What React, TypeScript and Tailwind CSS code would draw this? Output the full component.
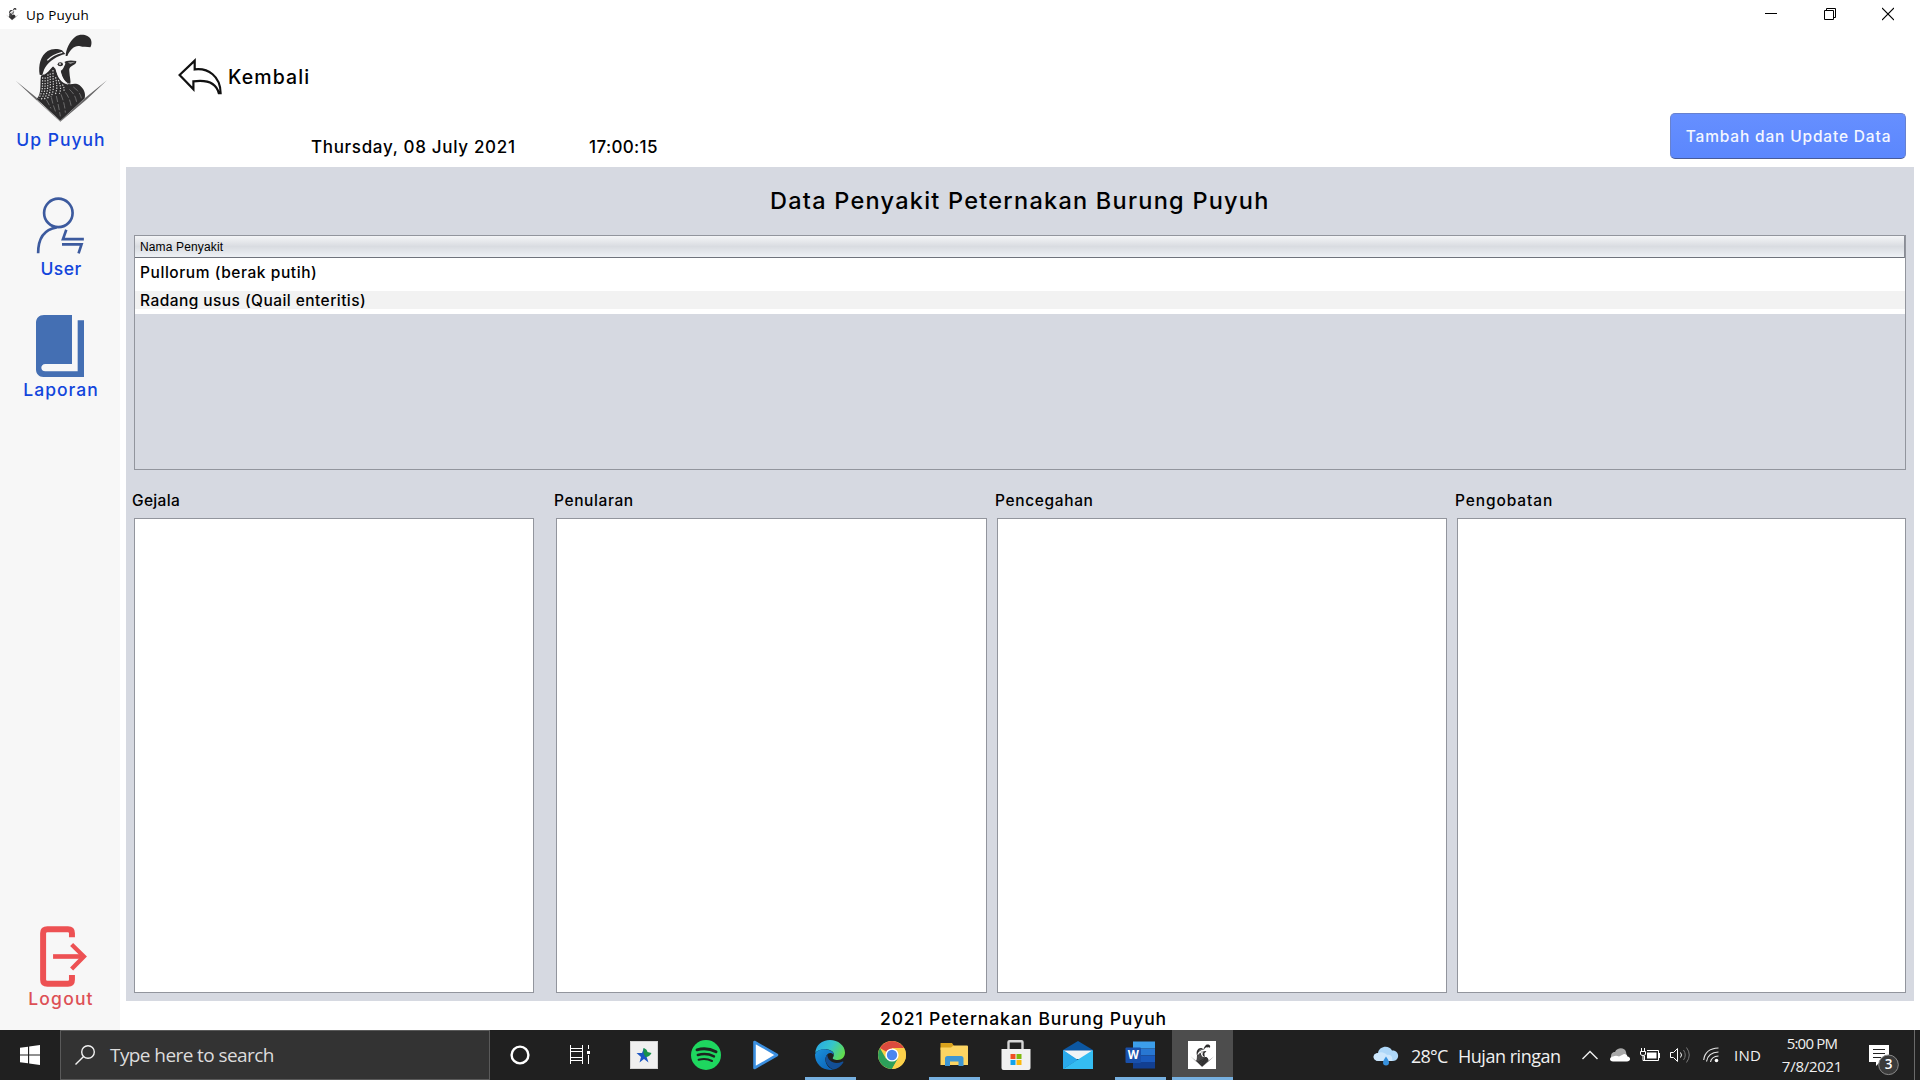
import React from 'react';

type IconProps = { className?: string };

function QuailLogo({ className }: IconProps) {
  return (
    <svg viewBox="0 0 300 285" className={className} fill="#2c2b2c">
      <path d="M17 152 L80 203 L82 211 L151 273 L225 204 L291 151 L228 210 L151 275 L78 209Z" opacity="0.7" />
      <path d="M167 78C168 58 177 36 196 20C212 10 236 14 243 29C246 38 244 47 241 52C232 50 220 53 208 48C194 46 180 58 172 78Z" />
      <path d="M89 134C84 106 92 77 113 63C126 55 143 55 156 61L166 72C142 78 118 92 106 112C101 120 99 130 97 136Z" />
      <path d="M93 137C108 132 116 120 128 108L136 116C144 140 156 158 180 163C192 160 201 160 208 165C222 176 228 191 224 205L151 272L80 207C96 190 89 160 93 137Z" />
      <path d="M160 98C169 91 181 90 199 93L198 99C188 110 176 108 178 124C179 142 183 154 181 161C168 161 156 143 152 122C160 118 165 108 160 98Z" />
      <path d="M132 92C143 83 158 80 168 86L159 92C149 86 141 91 137 103L127 111C118 120 113 129 101 135C107 117 117 103 132 92Z" fill="#f6f6f6" />
      <path d="M137 100C142 91 158 89 166 99C165 111 156 116 151 116C152 136 160 153 176 164C155 161 140 141 138 116Z" fill="#f6f6f6" />
      <ellipse cx="151" cy="103" rx="8" ry="6" />
      <ellipse cx="150" cy="102" rx="3.5" ry="2.5" fill="#f6f6f6" />
      <path d="M112 91C125 77 140 71 157 67" fill="none" stroke="#f6f6f6" strokeWidth="4" />
      <path d="M173 97L197 95L181 102Z" fill="#8f8f8f" />
      <g fill="none" stroke="#d6d6d6" strokeWidth="3.6" strokeDasharray="4 4">
        <path d="M98 142C97 166 100 184 86 205" />
        <path d="M106 138C104 164 109 183 94 208" strokeDashoffset="4" />
        <path d="M114 133C112 160 117 182 103 208" />
        <path d="M121 126C119 158 126 181 112 206" strokeDashoffset="4" />
        <path d="M129 120C128 152 135 178 123 200" />
        <path d="M136 137C140 160 144 175 135 195" strokeDashoffset="4" />
        <path d="M145 150C152 168 154 178 148 191" />
        <path d="M155 160C163 172 164 178 160 186" strokeDashoffset="4" />
      </g>
      <g fill="none" stroke="#8d8d8d" strokeWidth="2" strokeDasharray="19 6">
        <path d="M109 209L123 235" />
        <path d="M124 202C128 220 132 235 139 250" />
        <path d="M139 198C143 215 147 235 151 259" />
        <path d="M153 193C160 210 165 230 166 248" />
        <path d="M166 187C176 199 182 216 184 232" />
        <path d="M178 178C192 190 198 203 200 218" />
        <path d="M190 171C203 180 213 194 214 205" />
      </g>
    </svg>
  );
}

function BackArrow() {
  return (
    <svg viewBox="0 0 44 37" className="h-[37px] w-[44px]" fill="#fff" stroke="#111" strokeWidth="2.2" strokeLinejoin="miter">
      <path d="M1.6 17L16.7 2.6V11.4C30 9.8 42.5 18 42.6 35.2H40.8C38 24 28 21.6 15.4 23.3V31.3Z" />
    </svg>
  );
}

function UserIcon() {
  return (
    <svg viewBox="0 0 144 172" className="h-[57px] w-[48px]" fill="none" stroke="#3c5a9e" strokeWidth="8">
      <circle cx="67" cy="48" r="43" />
      <path d="M6 170C6 128 22 98 62 92" />
      <path d="M91 99L81 127H144" />
      <path d="M78 143H137L128 170" />
    </svg>
  );
}

function BookIcon() {
  return (
    <svg viewBox="0 0 144 186" className="h-[62px] w-[48px]" fill="#446fb3">
      <path d="M24 0H108V147H28C12 147 12 169 28 169H125V16H144V186H22C9 186 0 177 0 163V24C0 9 9 0 24 0Z" />
    </svg>
  );
}

function LogoutIcon() {
  return (
    <svg viewBox="0 0 144 184" className="h-[61px] w-[48px]" fill="none" stroke="#ed5153">
      <path d="M96 34V22Q96 10 84 10H22Q9 10 9 22V162Q9 174 22 174H84Q96 174 96 162V148" strokeWidth="18" />
      <path d="M39 92H128" strokeWidth="14" />
      <path d="M95 56L132 92L95 130" strokeWidth="13" />
    </svg>
  );
}

function SideItem({ label, children, className }: { label: string; children: React.ReactNode; className: string }) {
  return (
    <div className="flex flex-col items-center">
      {children}
      <div className={`ml-[2px] whitespace-nowrap text-[17.5px] leading-[20px] ${className}`}>{label}</div>
    </div>
  );
}

function TitleBar() {
  return (
    <header className="flex h-[29px] shrink-0 items-start bg-white pl-[5px]">
      <QuailLogo className="mt-[6px] h-[16px] w-[14px]" />
      <span className="ml-[7px] mt-[5px] font-['Open_Sans'] text-[13.5px] leading-[20px] tracking-[0.2px] text-black">Up Puyuh</span>
      <div className="ml-auto mr-[26px] mt-[7px] flex gap-[46.5px]">
        <svg className="h-[14px] w-[12px]" viewBox="0 0 12 14" stroke="#000"><path d="M0 6.5H12" /></svg>
        <svg className="h-[14px] w-[12px]" viewBox="0 0 12 14" fill="none" stroke="#000"><path d="M0.5 3.5H9.5V12.5H0.5ZM2.5 3.5V1.5H11.5V10.5H9.5" /></svg>
        <svg className="h-[14px] w-[12px]" viewBox="0 0 12 14" stroke="#000" strokeWidth="1.1"><path d="M0 1L12 13M12 1L0 13" /></svg>
      </div>
    </header>
  );
}

function Sidebar() {
  return (
    <aside className="flex w-[120px] shrink-0 flex-col bg-[#f7f7f7] text-[#1245dc]">
      <div className="pt-px">
        <SideItem label="Up Puyuh" className="mt-[5px] tracking-[1px]">
          <QuailLogo className="h-[95px] w-[100px]" />
        </SideItem>
      </div>
      <div className="mt-[47px]">
        <SideItem label="User" className="mt-[5px] tracking-[0.45px]"><UserIcon /></SideItem>
      </div>
      <div className="mt-[36px]">
        <SideItem label="Laporan" className="mt-[3px] tracking-[1px]"><BookIcon /></SideItem>
      </div>
      <div className="mt-auto pb-[21px] text-[#dd5055]">
        <SideItem label="Logout" className="mt-[2px] tracking-[1.2px]">
          <div className="ml-[8px]"><LogoutIcon /></div>
        </SideItem>
      </div>
    </aside>
  );
}

function DetailBox({ label, track, width }: { label: string; track: string; width: string }) {
  return (
    <section className={`flex flex-col ${width}`}>
      <div className={`-ml-[2px] mb-[7px] h-[20px] text-[15.5px] leading-[20px] ${track}`}>{label}</div>
      <div className="h-[475px] border border-[#92959d] bg-white" />
    </section>
  );
}

function DiseaseTable() {
  return (
    <div className="mx-[8px] flex h-[235px] flex-col border border-[#92959d]">
      <div className="h-[22px] border-b border-r border-r-[#8a8d96] border-b-[#6f737c] bg-gradient-to-b from-[#f4f5f7] via-[#d9dce1] to-[#eef1f5] pl-[5px] font-['Liberation_Sans'] text-[12px] font-normal leading-[22px] tracking-[0.14px]">
        Nama Penyakit
      </div>
      <div className="h-[33px] bg-white pl-[5px] text-[15.5px] leading-[29px] tracking-[0.57px]">Pullorum (berak putih)</div>
      <div className="h-[18px] bg-[#f2f2f2] pl-[5px] text-[15.5px] leading-[20px] tracking-[0.44px]">Radang usus (Quail enteritis)</div>
      <div className="h-[5px] bg-white" />
    </div>
  );
}

function Main() {
  return (
    <main className="flex flex-1 flex-col bg-white pl-[6px] pr-[6px]">
      <div className="flex h-[138px] justify-between">
        <div>
          <div className="ml-[52px] mt-[29px] flex h-[37px] items-start">
            <BackArrow />
            <span className="ml-[6px] mt-[7px] text-[19.5px] leading-[24px] tracking-[1.1px]">Kembali</span>
          </div>
          <div className="ml-[185px] mt-[42px] flex text-[17px] leading-[20px]">
            <span className="w-[278px] tracking-[0.68px]">Thursday, 08 July 2021</span>
            <span className="tracking-[0.36px]">17:00:15</span>
          </div>
        </div>
        <button className="mr-[8px] mt-[84px] h-[46px] w-[236px] rounded-[5px] border border-[#6781cf] border-b-[#485b98] bg-gradient-to-b from-[#668fff] to-[#5b87fd] pl-px pt-px text-[15.5px] font-medium tracking-[0.83px] text-[#f4f7ff]">
          Tambah dan Update Data
        </button>
      </div>
      <div className="flex h-[834px] flex-col bg-[#d6d9e1]">
        <h1 className="ml-[644px] mt-[19px] h-[49px] whitespace-nowrap text-[23.5px] font-medium leading-[30px] tracking-[1.25px]">
          Data Penyakit Peternakan Burung Puyuh
        </h1>
        <DiseaseTable />
        <div className="ml-[8px] mt-[21px] flex">
          <DetailBox label="Gejala" track="tracking-[0.34px]" width="w-[400px] mr-[22px]" />
          <DetailBox label="Penularan" track="tracking-[0.6px]" width="w-[431px] mr-[10px]" />
          <DetailBox label="Pencegahan" track="tracking-[0.64px]" width="w-[450px] mr-[10px]" />
          <DetailBox label="Pengobatan" track="tracking-[0.9px]" width="w-[449px]" />
        </div>
      </div>
      <footer className="ml-[754px] mt-[8px] text-[17.5px] leading-[20px] tracking-[0.86px]">2021 Peternakan Burung Puyuh</footer>
    </main>
  );
}

function TaskCell({ children, open, active }: { children: React.ReactNode; open?: boolean; active?: boolean }) {
  return (
    <div className={`flex h-[50px] flex-col items-center ${active ? 'ml-px w-[61px] bg-[#4d4d4d]' : 'w-[62px]'}`}>
      <div className="flex h-[47px] items-center pt-[3px]">{children}</div>
      <div className={`h-[3px] ${active ? 'w-full' : 'w-[51px]'} ${open ? 'bg-[#76b0e0]' : ''}`} />
    </div>
  );
}

const ICON = 'h-[30px] w-[30px]';

function TaskIcons() {
  return (
    <div className="-ml-px flex">
      <TaskCell>
        <svg viewBox="0 0 30 30" className={ICON}><circle cx="15" cy="15" r="8.4" fill="none" stroke="#fff" strokeWidth="2.4" /></svg>
      </TaskCell>
      <TaskCell>
        <svg viewBox="0 0 30 30" className="mr-[4px] h-[30px] w-[30px]" fill="none" stroke="#fff" strokeWidth="1">
          <path d="M5.5 5V8.5H17.5V5M5.5 24V20.5H17.5V24M5.5 11.5H17.5V17.5H5.5ZM5.5 8V21M17.5 8V21M23.5 5V9M23.5 15V24" />
          <rect x="22" y="11" width="3" height="3" fill="#fff" stroke="none" />
        </svg>
      </TaskCell>
      <TaskCell>
        <svg viewBox="0 0 28 28" className="h-[28px] w-[28px]">
          <rect x="0.5" y="0.5" width="27" height="27" fill="#efefef" stroke="#d2d2d2" />
          <path d="M6.5 12H12L14 7L16 12H20L16.5 15.5L18.5 21.5L14 18L9.5 21.5L11 16Z" fill="#1c57c4" />
          <path d="M13.5 7Q17 8 17.5 11L21.5 12Q19.5 16 15.5 16Q12.5 12 13.5 7Z" fill="#16924a" />
        </svg>
      </TaskCell>
      <TaskCell>
        <svg viewBox="0 0 30 30" className={ICON}>
          <circle cx="15" cy="15" r="15" fill="#1ed75f" />
          <g fill="none" stroke="#1d2420" strokeLinecap="round">
            <path d="M6 9.8Q16 7 25 11.8" strokeWidth="2.9" />
            <path d="M6.8 15Q15.5 12.6 23 16.4" strokeWidth="2.4" />
            <path d="M7.6 19.8Q15 17.8 21 21" strokeWidth="2" />
          </g>
        </svg>
      </TaskCell>
      <TaskCell>
        <svg viewBox="0 0 30 30" className="mr-[2px] h-[30px] w-[30px]">
          <path d="M2.500 2V28L25 15Z" fill="#fff" stroke="#3b8fe0" strokeWidth="2.6" strokeLinejoin="round" />
        </svg>
      </TaskCell>
      <TaskCell open>
        <svg viewBox="0 0 30 30" className={ICON}>
          <defs>
            <linearGradient id="edgeTop" x1="0" y1="0.2" x2="1" y2="0.6"><stop offset="0" stopColor="#28a8e8" /><stop offset="0.5" stopColor="#35c5cb" /><stop offset="1" stopColor="#62dc4c" /></linearGradient>
            <linearGradient id="edgeSide" x1="0" y1="0" x2="0.8" y2="1"><stop offset="0" stopColor="#1b92dc" /><stop offset="1" stopColor="#0c63b8" /></linearGradient>
          </defs>
          <path d="M0.2 13C1 5 7 0 15 0C23 0 30 5.5 30 12.5C30 17 27 20 22.5 20C19.5 20 17.2 19 17.8 17.8C20.5 14 18 10.5 13 9.5C8 8.7 3 9.5 0.2 13Z" fill="url(#edgeTop)" />
          <path d="M0 14.5C1.5 10 7 8.7 12 9.5C16 10.2 19 12 18.4 15C16.5 11.5 11.5 13 10.5 18C9.7 23.5 13.5 28.5 18.5 29.6C8.5 31.5 0 24.5 0 14.5Z" fill="url(#edgeSide)" />
          <path d="M12.3 14.6C9 18 10 26 18.5 29.6C22.5 28.8 26 26.3 28 23C29 21.7 28 21 27 21.7C20 25 12.5 21.5 12.3 14.6Z" fill="#134f97" />
        </svg>
      </TaskCell>
      <TaskCell>
        <svg viewBox="0 0 28 28" className="h-[28px] w-[28px]">
          <circle cx="14" cy="14" r="14" fill="#fbd04a" />
          <path d="M14 14L1.9 7A14 14 0 0 1 26.1 7H14Z" fill="#dc4b3e" />
          <path d="M14 14L7.9 17.5L1.9 7A14 14 0 0 0 14 28L20 17.5Z" fill="#2da05a" />
          <path d="M14 7H26.1A14 14 0 0 1 14 28L20 17.5Z" fill="#fbd04a" />
          <circle cx="14" cy="14" r="6.6" fill="#fff" />
          <circle cx="14" cy="14" r="5.2" fill="#4a86ee" />
        </svg>
      </TaskCell>
      <TaskCell open>
        <svg viewBox="0 0 28 26" className="h-[26px] w-[28px]">
          <path d="M0.5 4V1.5Q0.5 1 1 1H12L14 4V8H0.5Z" fill="#d9a21c" />
          <path d="M0.5 5.5H11L13.5 3.5H27Q28 3.5 28 4.5V23H0.5Z" fill="#fcd462" />
          <path d="M5 24V16.5Q5 14 7.5 14H21Q23.5 14 23.5 16.5V24H18.5V19.5H10V24Z" fill="#3e96d3" />
        </svg>
      </TaskCell>
      <TaskCell>
        <svg viewBox="0 0 30 30" className={ICON}>
          <path d="M7.5 10V2Q7.5 1.3 8.5 1.3H20.5Q21.5 1.3 21.5 2V10" fill="none" stroke="#d6d6d6" strokeWidth="2.4" />
          <path d="M0.5 9H29.5V28Q29.5 30 27.5 30H2.5Q0.5 30 0.5 28Z" fill="#f1f1f1" />
          <path d="M9.5 14H14.5V19H9.5Z" fill="#f04e24" /><path d="M15.5 14H20.5V19H15.5Z" fill="#7fb80e" />
          <path d="M9.5 20H14.5V25H9.5Z" fill="#10a3ec" /><path d="M15.5 20H20.5V25H15.5Z" fill="#fbb80a" />
        </svg>
      </TaskCell>
      <TaskCell>
        <svg viewBox="0 0 30 28" className="h-[28px] w-[30px]">
          <path d="M0 9L15 0L30 9V14H0Z" fill="#0c57a2" />
          <path d="M1 9.5H29V18H1Z" fill="#f2f4f6" />
          <path d="M0 9L15 19L0 28Z" fill="#24a1e6" />
          <path d="M30 9L0 28H30Z" fill="#35bdf2" />
          <path d="M0 9L13.5 19L0 28Z" fill="#2aa9ea" />
        </svg>
      </TaskCell>
      <TaskCell open>
        <svg viewBox="0 0 30 28" className="mr-px h-[28px] w-[30px]">
          <path d="M8 0.5H30V7.5H8Z" fill="#3c9eea" /><path d="M8 7.5H30V14.3H8Z" fill="#2877d2" />
          <path d="M8 14.3H30V21H8Z" fill="#1a5abc" /><path d="M8 21H30V27.5H8Z" fill="#123f91" />
          <rect x="0.5" y="6.5" width="15.5" height="15.5" rx="1" fill="#1950ab" />
          <text x="8.2" y="18.4" textAnchor="middle" fill="#fff" fontFamily="Open Sans" fontSize="11.5" fontWeight="700">W</text>
        </svg>
      </TaskCell>
      <TaskCell open active>
        <div className="mr-px flex h-[28px] w-[28px] items-center justify-center bg-white">
          <QuailLogo className="h-[25px] w-[26px]" />
        </div>
      </TaskCell>
    </div>
  );
}

function Tray() {
  return (
    <div className="ml-auto flex h-[50px] text-[#f0f0f0]">
      <svg viewBox="0 0 26 20" className="mt-[16px] h-[20px] w-[26px]">
        <path d="M6 15C-1 15-1 7.500 5 7C6 0 16-1.500 19 4.500C27 4 27 15 20 15Z" fill="#aed7f8" />
        <path d="M6 15C-1 15-1 7.500 5 7C8 5 13 7 14 9C18 8 20 11 19 15Z" fill="#cde7fc" />
        <path d="M13 10.500Q16 14.500 16 16.500A3 3 0 0 1 10 16.500Q10 14.500 13 10.500Z" fill="#3791de" />
      </svg>
      <span className="ml-[12px] w-[47px] whitespace-nowrap text-[18px] leading-[52px] tracking-[-0.75px]">28°C</span>
      <span className="w-[124px] whitespace-nowrap text-[18px] leading-[52px] tracking-[-0.48px]">Hujan ringan</span>
      <svg viewBox="0 0 16 10" className="mt-[20px] h-[10px] w-[16px]" fill="none" stroke="#f0f0f0" strokeWidth="1.4"><path d="M0.500 9L8 1.500L15.500 9" /></svg>
      <svg viewBox="0 0 20 14" className="ml-[12px] mt-[18px] h-[14px] w-[20px]">
        <path d="M1 9C1 4 4 4 5 4C7-1 15-1 16 4L17 9Z" fill="#a9a9a9" />
        <path d="M3 13.500C-1 13.500-1 9 3 8.500Q6 7 9 8.500L14 6Q17 6 17.500 8.500C21 9 21 13.500 17 13.500Z" fill="#fff" />
      </svg>
      <svg viewBox="0 0 20 16" className="ml-[10px] mt-[18px] h-[16px] w-[20px]" fill="none" stroke="#fff">
        <path d="M7 2.500H18.500V12.500H4.500V8M19.500 5V10" /><path d="M1.500 0V3M4.500 0V3M0.500 3.500H5.500V6Q5.500 7.500 3 7.500Q0.500 7.500 0.500 6ZM3 7.500V12.500H5" />
        <path d="M7 4.500H16.500V10.500H7Z" fill="#fff" stroke="none" />
      </svg>
      <svg viewBox="0 0 22 18" className="ml-[10px] mt-[16px] h-[18px] w-[22px]" fill="none" stroke="#fff">
        <path d="M0.500 6.500H3.500L7.500 2.500V15.500L3.500 11.500H0.500Z" /><path d="M10.500 6.500Q12.500 9 10.500 11.500" />
        <path d="M13.500 4Q17 9 13.500 14M16.500 1.500Q22 9 16.500 16.500" stroke="#777" />
      </svg>
      <svg viewBox="0 0 16 16" className="ml-[11px] mt-[17px] h-[16px] w-[16px]" fill="none" stroke="#e4e4e4" strokeWidth="1.200">
        <path d="M0.700 13Q2 1.500 15.500 1M3.500 14.500Q5 5.500 15.500 5M7.500 15Q8.500 9.500 15.500 9" /><circle cx="13.500" cy="13.500" r="1.800" fill="#fff" stroke="none" />
      </svg>
      <span className="ml-[15px] w-[43px] text-[15px] leading-[50px] tracking-[0.25px]">IND</span>
      <div className="mt-[2px] w-[70px] whitespace-nowrap text-center text-[15px] leading-[23px]">
        <div className="tracking-[-0.77px]">5:00 PM</div>
        <div className="tracking-[-0.27px]">7/8/2021</div>
      </div>
      <svg viewBox="0 0 30 32" className="ml-[22px] mt-[14px] h-[32px] w-[30px]">
        <path d="M0 1H20V18H11L7 22V18H0Z" fill="#fff" />
        <path d="M4 5.500H16M4 9.500H16M4 13.500H12" stroke="#222" />
        <circle cx="19.500" cy="20.800" r="9.800" fill="#3b3b3b" stroke="#8a8a8a" />
        <text x="19.500" y="25.200" textAnchor="middle" fill="#fff" fontFamily="Open Sans" fontSize="13.500" fontWeight="600">3</text>
      </svg>
      <div className="ml-[15px] h-[50px] w-[6px] border-l border-[#6a6a6a]" />
    </div>
  );
}

function Taskbar() {
  return (
    <div className="flex h-[50px] shrink-0 bg-[#202020] font-['Open_Sans'] font-normal">
      <div className="flex w-[60px] items-center justify-center">
        <svg viewBox="0 0 60 60" className="h-[20px] w-[20px]" fill="#fff">
          <path d="M0 8L24 5V28.500H0ZM27.500 4.500L60 0V28.500H27.500ZM0 31.500H24V55L0 52ZM27.500 31.500H60V60L27.500 55.500Z" />
        </svg>
      </div>
      <div className="flex w-[430px] items-center border border-[#5a5a5a] bg-[#333]">
        <svg viewBox="0 0 20 20" className="ml-[14px] h-[20px] w-[20px]" fill="none" stroke="#f2f2f2" strokeWidth="1.400">
          <circle cx="13" cy="7" r="6.300" /><path d="M8.600 11.500L0.500 19.500" />
        </svg>
        <span className="ml-[15px] whitespace-nowrap text-[19px] leading-[48px] tracking-[-0.58px] text-[#dcdcdc]">Type here to search</span>
      </div>
      <TaskIcons />
      <Tray />
    </div>
  );
}

export default function App() {
  return (
    <div className="flex h-[1080px] w-[1920px] flex-col overflow-hidden bg-white font-['Inter',sans-serif] font-medium text-black">
      <TitleBar />
      <div className="flex min-h-0 flex-1">
        <Sidebar />
        <Main />
      </div>
      <Taskbar />
    </div>
  );
}
